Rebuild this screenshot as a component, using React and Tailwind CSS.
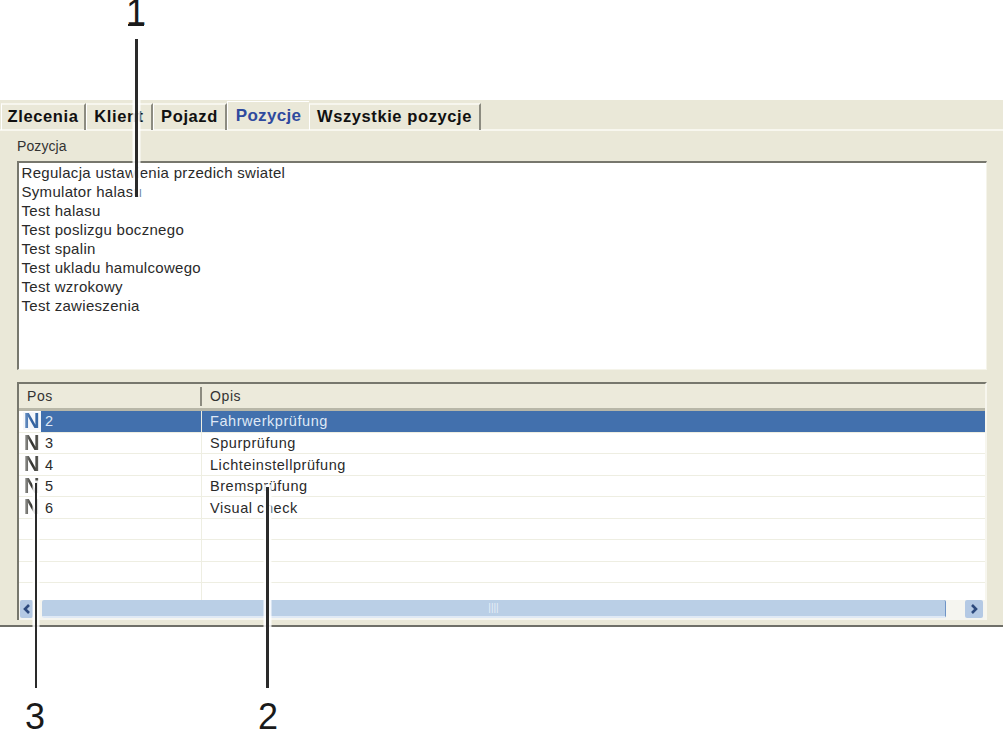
const font = { fontFamily: '"Liberation Sans", Arial, sans-serif' };

const listItems = [
  "Regulacja ustawienia przedich swiatel",
  "Symulator halasu",
  "Test halasu",
  "Test poslizgu bocznego",
  "Test spalin",
  "Test ukladu hamulcowego",
  "Test wzrokowy",
  "Test zawieszenia",
];

const rows = [
  { pos: "2", opis: "Fahrwerkprüfung", selected: true },
  { pos: "3", opis: "Spurprüfung" },
  { pos: "4", opis: "Lichteinstellprüfung" },
  { pos: "5", opis: "Bremsprüfung" },
  { pos: "6", opis: "Visual check" },
  {}, {}, {}, {},
];

function Tab({ label, width, active }) {
  return (
    <div
      className={
        active
          ? "flex h-[29px] items-center justify-center border-t border-l border-t-white border-l-white text-[17px] font-bold tracking-[0.3px] text-[#2f4a9e]"
          : "mt-[2px] flex h-[27px] items-center justify-center border-t-2 border-r-2 border-l border-t-[#f7f6ee] border-r-[#8c8b80] border-l-white pb-[3px] text-[16.5px] font-bold tracking-[0.6px] text-[#111]"
      }
      style={{ width }}
    >
      {label}
    </div>
  );
}

function NIcon({ selected }) {
  return (
    <span className={"flex h-[18px] w-[18px] shrink-0 items-center justify-center " + (selected ? "bg-[#f4f7fb]" : "")}>
      <span
        className={
          "block bg-clip-text text-[22px] leading-[18px] font-bold text-transparent " +
          (selected
            ? "bg-gradient-to-r from-[#6f97c8] via-[#2f5f9f] to-[#3f6fa8]"
            : "bg-gradient-to-r from-[#a8a8a4] via-[#2f2f2b] to-[#6a6a64]")
        }
      >
        N
      </span>
    </span>
  );
}

function Row({ pos, opis, selected }) {
  return (
    <div
      className={
        "flex h-[21.55px] border-b border-[#eeeee2] text-[14.5px] tracking-[0.55px] " +
        (selected ? "text-[#dfe8f5]" : "text-[#2a2a2a]")
      }
    >
      <div className="flex w-[183px] items-center border-r border-[#eeeee2]">
        {pos && (
          <>
            <span className="ml-[4px]">
              <NIcon selected={selected} />
            </span>
            <span className={"flex h-full flex-1 items-center pt-[2px] pl-[4px] " + (selected ? "bg-[#4270ad]" : "")}>{pos}</span>
          </>
        )}
      </div>
      <div className={"flex flex-1 items-center pt-[2px] pl-[8px] " + (selected ? "bg-[#4270ad]" : "")}>{opis}</div>
    </div>
  );
}

function Arrow({ dir }) {
  return (
    <svg viewBox="0 0 12 12" className="h-[12px] w-[12px]">
      <path
        d={dir === "left" ? "M8 2 L4 6 L8 10" : "M4 2 L8 6 L4 10"}
        fill="none"
        stroke="#2d4a7e"
        strokeWidth="2.6"
      />
    </svg>
  );
}

function Line({ className }) {
  return <div className={"absolute w-[2.5px] bg-[#2a2a2a] shadow-[0_0_0_2.5px_rgba(255,255,255,0.85)] " + className} />;
}

function Num({ className, children }) {
  return <div className={"absolute text-[36px] leading-none text-[#1a1a1a] " + className}>{children}</div>;
}

export default function App() {
  return (
    <div className="relative h-[730px] w-[1003px] overflow-hidden bg-white" style={font}>
      <div className="h-[100px]" />
      <div className="flex h-[527px] flex-col border-b-2 border-b-[#6f6f68] bg-[#eae8d8]">
        <div className="flex h-[31px] items-start border-b-2 border-b-[#f8f7ef] pt-[1px] pl-[1px]">
          <Tab label="Zlecenia" width={85} />
          <Tab label="Klient" width={67} />
          <Tab label="Pojazd" width={74} />
          <Tab label="Pozycje" width={82} active />
          <Tab label="Wszystkie pozycje" width={172} />
        </div>
        <div className="flex flex-1 flex-col pr-[16px] pl-[17px]">
          <div className="h-[30px] pt-[5px] text-[14px] tracking-[0.1px] text-[#333]">Pozycja</div>
          <div className="h-[209px] border-t-2 border-r border-b border-l-2 border-t-[#77776d] border-r-[#f5f4ea] border-b-[#f5f4ea] border-l-[#77776d] bg-white pl-[2.5px] text-[15px] leading-[19px] tracking-[0.3px] text-[#2a2a2a]">
            {listItems.map((t) => (
              <div key={t}>{t}</div>
            ))}
          </div>
          <div className="h-[12px]" />
          <div className="flex h-[238px] flex-col border-t-2 border-r-2 border-l-2 border-t-[#77776d] border-r-[#f7f6ee] border-l-[#77776d] bg-white">
            <div className="flex h-[27px] border-b-[3px] border-b-[#b8b7a8] bg-[#eceadb] text-[14px] tracking-[0.6px] text-[#333]">
              <div className="w-[183px] pt-[3px] pl-[8px]">
                <div className="flex h-[19px] items-center border-r-2 border-r-[#8c8b80]">Pos</div>
              </div>
              <div className="flex flex-1 items-center pl-[8px]">Opis</div>
            </div>
            <div className="h-[189px] overflow-hidden">
              {rows.map((r, i) => (
                <Row key={i} {...r} />
              ))}
            </div>
            <div className="flex h-[20px] items-start bg-[#f5f5f0] pr-[2px] pl-[1px]">
              <div className="flex h-[18px] w-[13px] items-center justify-center rounded-[2px] bg-[#b4c9e4]">
                <Arrow dir="left" />
              </div>
              <div className="ml-[9px] flex h-[18px] w-[904px] items-center justify-center rounded-[2px] border-r border-b-2 border-r-[#6f94c6] border-b-[#dfe9f5] bg-[#bacfe6] text-[10px] leading-none text-[#e6eef7]">
                ||||
              </div>
              <div className="flex-1" />
              <div className="flex h-[18px] w-[18px] items-center justify-center rounded-[2px] bg-[#b4c9e4]">
                <Arrow dir="right" />
              </div>
            </div>
          </div>
        </div>
      </div>

      <Num className="top-[-5px] left-[126px]">1</Num>
      <div className="absolute top-[24px] left-[128px] h-[2px] w-[16px] bg-[#1a1a1a]" />
      <Line className="top-[39px] left-[135px] h-[158px]" />
      <Num className="top-[699px] left-[25px]">3</Num>
      <Line className="top-[483px] left-[34.5px] h-[205px]" />
      <Num className="top-[699px] left-[258px]">2</Num>
      <Line className="top-[487px] left-[266px] h-[201px]" />
    </div>
  );
}
